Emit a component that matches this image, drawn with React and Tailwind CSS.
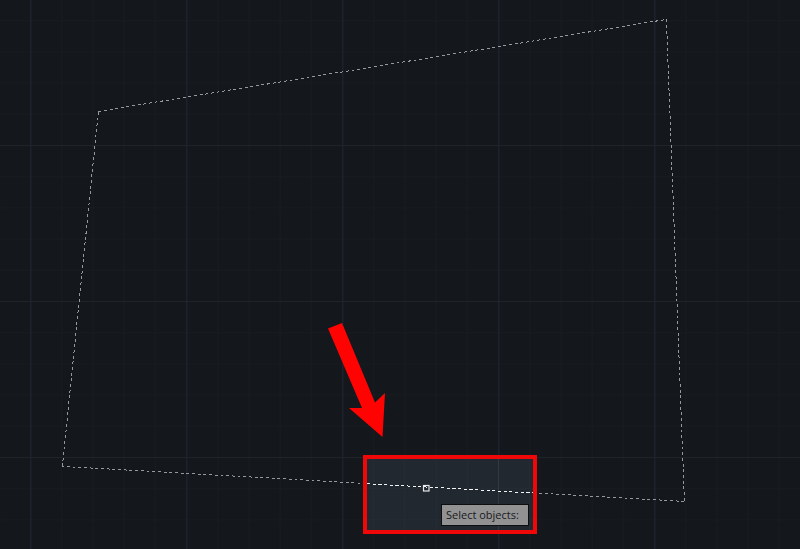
const CORNERS = [
  [98, 111],
  [666, 19],
  [684, 501],
  [62, 466],
];

const MAJOR = 156;
const MINOR = MAJOR / 5;

function Grid() {
  return (
    <>
      <defs>
        <pattern id="minor" x="30" y="145" width={MINOR} height={MINOR} patternUnits="userSpaceOnUse">
          <path d={`M0.5 0V${MINOR}M0 0.5H${MINOR}`} stroke="#181c21" fill="none" />
        </pattern>
        <pattern id="major" x="30" y="145" width={MAJOR} height={MAJOR} patternUnits="userSpaceOnUse">
          <path d={`M0.75 0V${MAJOR}`} stroke="#1b212d" strokeWidth="1.5" fill="none" />
          <path d={`M0 0.5H${MAJOR}`} stroke="#1e242a" fill="none" />
        </pattern>
      </defs>
      <rect width="100%" height="100%" fill="url(#minor)" />
      <rect width="100%" height="100%" fill="url(#major)" />
    </>
  );
}

function Outline() {
  return CORNERS.map(([x, y], i) => {
    const [nx, ny] = CORNERS[(i + 1) % CORNERS.length];
    return (
      <line
        key={i}
        x1={x + 0.4}
        y1={y + 0.4}
        x2={nx + 0.4}
        y2={ny + 0.4}
        stroke="#96999b"
        strokeDasharray="2.9 2.8"
        shapeRendering="crispEdges"
      />
    );
  });
}

// area around the cursor, drawn brighter than the rest of the canvas
function Highlight() {
  return (
    <>
      <rect x="365" y="457" width="170" height="75" fill="#212830" />
      <path d="M373.5 457V532M404.5 457V532M436.5 457V532M467.5 457V532M529.5 457V532M365 488.5H535M365 519.5H535" stroke="#242b33" />
      <path d="M498.5 457V532" stroke="#323941" />
      <line
        x1="367"
        y1="483.7"
        x2="533"
        y2="493"
        stroke="#f1f3f4"
        strokeDasharray="3.2 2.5"
        shapeRendering="crispEdges"
      />
      <rect x="423.5" y="485.5" width="5.500" height="5.500" fill="none" stroke="#e6e8e9" strokeWidth="1.2" />
      <rect x="365" y="457" width="170" height="75" fill="none" stroke="#f00808" strokeWidth="4" />
    </>
  );
}

export default function App() {
  return (
    <main className="relative min-h-screen overflow-hidden bg-[#14181c]">
      <svg className="absolute inset-0 h-full w-full" aria-hidden="true">
        <Grid />
        <Outline />
        <Highlight />
        <path d="M328 328.500L342 323L375 402.500L385 393L382.500 437L349 408L362 408Z" fill="#ff0303" />
      </svg>
      <div
        role="tooltip"
        className="absolute top-[504px] left-[441px] w-[88px] border border-[#0c0e10] bg-[#929293] px-1 font-['Open_Sans','Noto_Sans',sans-serif] text-[11px] leading-5 font-medium whitespace-nowrap text-[#17191b]"
      >
        Select objects:
      </div>
    </main>
  );
}
